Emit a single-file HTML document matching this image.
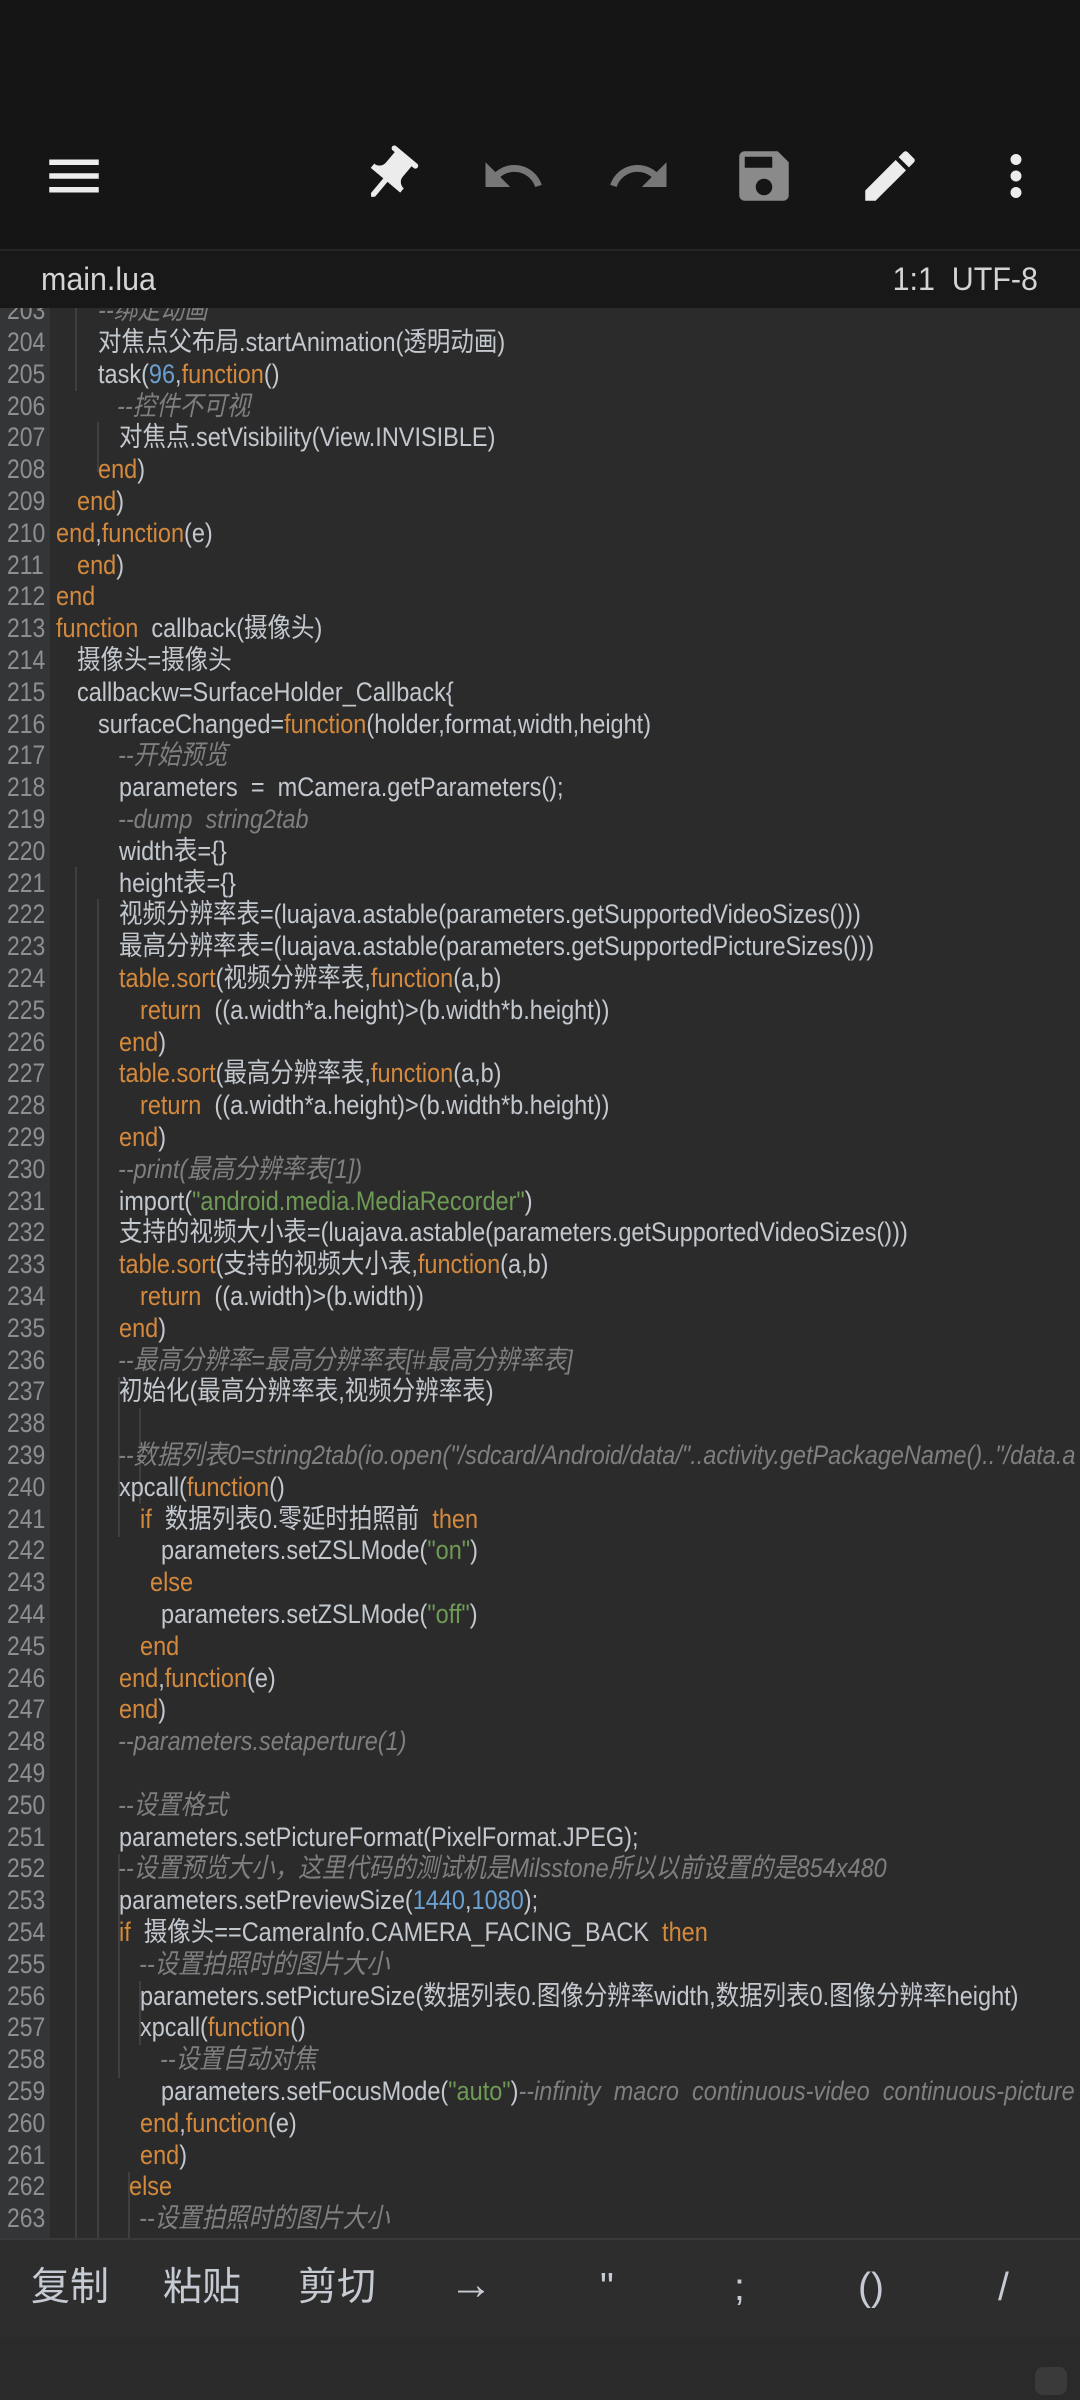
<!DOCTYPE html>
<html><head><meta charset="utf-8">
<style>
*{margin:0;padding:0;box-sizing:border-box}
body{width:1080px;height:2400px;background:#151515;position:relative;overflow:hidden;font-family:"Liberation Sans","Noto Sans CJK SC",sans-serif}
#hdr{position:absolute;left:0;top:0;width:1080px;height:249px;background:#151515}
#sep{position:absolute;left:0;top:249px;width:1080px;height:2px;background:#262626}
#fbar{position:absolute;left:0;top:251px;width:1080px;height:57px;background:#181818;color:#d4d4d4;font-size:32px}
#fbar .t{position:absolute;top:10px;transform:scaleX(.95);transform-origin:left}
#fbar .r{position:absolute;top:10px;right:42px;transform:scaleX(.95);transform-origin:right}
.ic{position:absolute;width:66px;height:66px;top:143px}
#code{position:absolute;left:0;top:308px;width:1080px;height:1930px;background:#2b2b2b;overflow:hidden}
#gut{position:absolute;left:0;top:0;width:50px;height:1930px;background:#343537}
.g{position:absolute;width:2px;background:#3f3f3f}
.l{position:absolute;left:0;height:32px;line-height:32px;font-size:27px;white-space:pre;color:#c3c8cf}
.n{position:absolute;left:7px;width:40px;color:#8e8f91;transform:scaleX(.85);transform-origin:left}
.c{position:absolute;transform:scaleX(.87);transform-origin:left}
.k{color:#d4893c}.s{color:#6f9a55}.d{color:#6b9fd0}.m{color:#7f7f7f;font-style:italic}
#bot{position:absolute;left:0;top:2238px;width:1080px;height:162px;background:#2d2d2d;border-top:2px solid #3a3a3a}
#bot2{position:absolute;left:0;top:2337px;width:1080px;height:63px;background:#2a2a2a}
.b{position:absolute;top:2264px;font-size:39px;color:#c5cad3;line-height:48px;font-family:"Liberation Sans","Noto Sans CJK SC",sans-serif}
</style></head><body>
<div id="hdr"></div>
<svg class="ic" style="left:41px" viewBox="0 0 24 24"><path fill="#ececec" d="M3 18h18v-2H3v2zm0-5h18v-2H3v2zm0-7v2h18V6H3z"/></svg>
<svg class="ic" style="left:356px" viewBox="0 0 24 24"><g transform="rotate(40 12 12)"><path fill="#ececec" d="M16 9V4h1c.55 0 1-.45 1-1s-.45-1-1-1H7c-.55 0-1 .45-1 1s.45 1 1 1h1v5c0 1.66-1.34 3-3 3v2h5.97v7l1 1 1-1v-7H19v-2c-1.66 0-3-1.34-3-3z"/></g></svg>
<svg class="ic" style="left:480px" viewBox="0 0 24 24"><path fill="#777" d="M12.5 8c-2.65 0-5.05.99-6.9 2.6L2 7v9h9l-3.62-3.62c1.39-1.16 3.16-1.88 5.12-1.88 3.54 0 6.55 2.31 7.6 5.5l2.37-.78C21.08 11.03 17.15 8 12.5 8z"/></svg>
<svg class="ic" style="left:606px" viewBox="0 0 24 24"><path fill="#777" d="M18.4 10.6C16.55 8.99 14.15 8 11.5 8c-4.65 0-8.58 3.03-9.96 7.22L3.9 16c1.05-3.19 4.05-5.5 7.6-5.5 1.95 0 3.73.72 5.12 1.88L13 16h9V7l-3.6 3.6z"/></svg>
<svg class="ic" style="left:731px" viewBox="0 0 24 24"><path fill="#8a8a8a" d="M17 3H5c-1.11 0-2 .9-2 2v14c0 1.1.89 2 2 2h14c1.1 0 2-.9 2-2V7l-4-4zm-5 16c-1.66 0-3-1.34-3-3s1.34-3 3-3 3 1.34 3 3-1.34 3-3 3zm3-10H5V5h10v4z"/></svg>
<svg class="ic" style="left:857px" viewBox="0 0 24 24"><path fill="#ececec" d="M3 17.25V21h3.75L17.81 9.94l-3.75-3.75L3 17.25zM20.71 7.04c.39-.39.39-1.02 0-1.41l-2.34-2.34c-.39-.39-1.02-.39-1.41 0l-1.83 1.83 3.75 3.75 1.83-1.83z"/></svg>
<svg class="ic" style="left:983px" viewBox="0 0 24 24"><path fill="#ececec" d="M12 8c1.1 0 2-.9 2-2s-.9-2-2-2-2 .9-2 2 .9 2 2 2zm0 2c-1.1 0-2 .9-2 2s.9 2 2 2 2-.9 2-2-.9-2-2-2zm0 6c-1.1 0-2 .9-2 2s.9 2 2 2 2-.9 2-2-.9-2-2-2z"/></svg>
<div id="sep"></div>
<div id="fbar"><span class="t" style="left:41px">main.lua</span><span class="r">1:1&nbsp;&nbsp;UTF-8</span></div>

<div id="code">
<div id="gut"></div>
<div class="g" style="left:75px;top:0;height:83px"></div>
<div class="g" style="left:97px;top:114px;height:50px"></div>
<div class="g" style="left:75px;top:559px;height:1380px"></div>
<div class="g" style="left:97px;top:591px;height:1350px"></div>
<div class="g" style="left:118px;top:1069px;height:160px"></div>
<div class="g" style="left:139px;top:1100px;height:96px"></div>
<div class="g" style="left:118px;top:1546px;height:224px"></div>
<div class="g" style="left:139px;top:1673px;height:64px"></div>
<div class="g" style="left:128px;top:1864px;height:70px"></div>

<div class="l" style="top:-14px"><span class="n">203</span><span class="c m" style="left:98px">--绑定动画</span></div>
<div class="l" style="top:18px"><span class="n">204</span><span class="c" style="left:98px">对焦点父布局.startAnimation(透明动画)</span></div>
<div class="l" style="top:50px"><span class="n">205</span><span class="c" style="left:98px">task(<span class="d">96</span>,<span class="k">function</span>()</span></div>
<div class="l" style="top:82px"><span class="n">206</span><span class="c m" style="left:117px">--控件不可视</span></div>
<div class="l" style="top:113px"><span class="n">207</span><span class="c" style="left:119px">对焦点.setVisibility(View.INVISIBLE)</span></div>
<div class="l" style="top:145px"><span class="n">208</span><span class="c" style="left:98px"><span class="k">end</span>)</span></div>
<div class="l" style="top:177px"><span class="n">209</span><span class="c" style="left:77px"><span class="k">end</span>)</span></div>
<div class="l" style="top:209px"><span class="n">210</span><span class="c" style="left:56px"><span class="k">end</span>,<span class="k">function</span>(e)</span></div>
<div class="l" style="top:241px"><span class="n">211</span><span class="c" style="left:77px"><span class="k">end</span>)</span></div>
<div class="l" style="top:272px"><span class="n">212</span><span class="c" style="left:56px"><span class="k">end</span></span></div>
<div class="l" style="top:304px"><span class="n">213</span><span class="c" style="left:56px"><span class="k">function</span>  callback(摄像头)</span></div>
<div class="l" style="top:336px"><span class="n">214</span><span class="c" style="left:77px">摄像头=摄像头</span></div>
<div class="l" style="top:368px"><span class="n">215</span><span class="c" style="left:77px">callbackw=SurfaceHolder_Callback{</span></div>
<div class="l" style="top:400px"><span class="n">216</span><span class="c" style="left:98px">surfaceChanged=<span class="k">function</span>(holder,format,width,height)</span></div>
<div class="l" style="top:431px"><span class="n">217</span><span class="c m" style="left:118px">--开始预览</span></div>
<div class="l" style="top:463px"><span class="n">218</span><span class="c" style="left:119px">parameters  =  mCamera.getParameters();</span></div>
<div class="l" style="top:495px"><span class="n">219</span><span class="c m" style="left:118px">--dump  string2tab</span></div>
<div class="l" style="top:527px"><span class="n">220</span><span class="c" style="left:119px">width表={}</span></div>
<div class="l" style="top:559px"><span class="n">221</span><span class="c" style="left:119px">height表={}</span></div>
<div class="l" style="top:590px"><span class="n">222</span><span class="c" style="left:119px">视频分辨率表=(luajava.astable(parameters.getSupportedVideoSizes()))</span></div>
<div class="l" style="top:622px"><span class="n">223</span><span class="c" style="left:119px">最高分辨率表=(luajava.astable(parameters.getSupportedPictureSizes()))</span></div>
<div class="l" style="top:654px"><span class="n">224</span><span class="c" style="left:119px"><span class="k">table.sort</span>(视频分辨率表,<span class="k">function</span>(a,b)</span></div>
<div class="l" style="top:686px"><span class="n">225</span><span class="c" style="left:140px"><span class="k">return</span>  ((a.width*a.height)&gt;(b.width*b.height))</span></div>
<div class="l" style="top:718px"><span class="n">226</span><span class="c" style="left:119px"><span class="k">end</span>)</span></div>
<div class="l" style="top:749px"><span class="n">227</span><span class="c" style="left:119px"><span class="k">table.sort</span>(最高分辨率表,<span class="k">function</span>(a,b)</span></div>
<div class="l" style="top:781px"><span class="n">228</span><span class="c" style="left:140px"><span class="k">return</span>  ((a.width*a.height)&gt;(b.width*b.height))</span></div>
<div class="l" style="top:813px"><span class="n">229</span><span class="c" style="left:119px"><span class="k">end</span>)</span></div>
<div class="l" style="top:845px"><span class="n">230</span><span class="c m" style="left:118px">--print(最高分辨率表[1])</span></div>
<div class="l" style="top:877px"><span class="n">231</span><span class="c" style="left:119px">import(<span class="s">"android.media.MediaRecorder"</span>)</span></div>
<div class="l" style="top:908px"><span class="n">232</span><span class="c" style="left:119px">支持的视频大小表=(luajava.astable(parameters.getSupportedVideoSizes()))</span></div>
<div class="l" style="top:940px"><span class="n">233</span><span class="c" style="left:119px"><span class="k">table.sort</span>(支持的视频大小表,<span class="k">function</span>(a,b)</span></div>
<div class="l" style="top:972px"><span class="n">234</span><span class="c" style="left:140px"><span class="k">return</span>  ((a.width)&gt;(b.width))</span></div>
<div class="l" style="top:1004px"><span class="n">235</span><span class="c" style="left:119px"><span class="k">end</span>)</span></div>
<div class="l" style="top:1036px"><span class="n">236</span><span class="c m" style="left:118px">--最高分辨率=最高分辨率表[#最高分辨率表]</span></div>
<div class="l" style="top:1067px"><span class="n">237</span><span class="c" style="left:119px">初始化(最高分辨率表,视频分辨率表)</span></div>
<div class="l" style="top:1099px"><span class="n">238</span></div>
<div class="l" style="top:1131px"><span class="n">239</span><span class="c m" style="left:118px">--数据列表0=string2tab(io.open("/sdcard/Android/data/"..activity.getPackageName().."/data.a</span></div>
<div class="l" style="top:1163px"><span class="n">240</span><span class="c" style="left:119px">xpcall(<span class="k">function</span>()</span></div>
<div class="l" style="top:1195px"><span class="n">241</span><span class="c" style="left:140px"><span class="k">if</span>  数据列表0.零延时拍照前  <span class="k">then</span></span></div>
<div class="l" style="top:1226px"><span class="n">242</span><span class="c" style="left:161px">parameters.setZSLMode(<span class="s">"on"</span>)</span></div>
<div class="l" style="top:1258px"><span class="n">243</span><span class="c" style="left:150px"><span class="k">else</span></span></div>
<div class="l" style="top:1290px"><span class="n">244</span><span class="c" style="left:161px">parameters.setZSLMode(<span class="s">"off"</span>)</span></div>
<div class="l" style="top:1322px"><span class="n">245</span><span class="c" style="left:140px"><span class="k">end</span></span></div>
<div class="l" style="top:1354px"><span class="n">246</span><span class="c" style="left:119px"><span class="k">end</span>,<span class="k">function</span>(e)</span></div>
<div class="l" style="top:1385px"><span class="n">247</span><span class="c" style="left:119px"><span class="k">end</span>)</span></div>
<div class="l" style="top:1417px"><span class="n">248</span><span class="c m" style="left:118px">--parameters.setaperture(1)</span></div>
<div class="l" style="top:1449px"><span class="n">249</span></div>
<div class="l" style="top:1481px"><span class="n">250</span><span class="c m" style="left:118px">--设置格式</span></div>
<div class="l" style="top:1513px"><span class="n">251</span><span class="c" style="left:119px">parameters.setPictureFormat(PixelFormat.JPEG);</span></div>
<div class="l" style="top:1544px"><span class="n">252</span><span class="c m" style="left:118px">--设置预览大小，这里代码的测试机是Milsstone所以以前设置的是854x480</span></div>
<div class="l" style="top:1576px"><span class="n">253</span><span class="c" style="left:119px">parameters.setPreviewSize(<span class="d">1440</span>,<span class="d">1080</span>);</span></div>
<div class="l" style="top:1608px"><span class="n">254</span><span class="c" style="left:119px"><span class="k">if</span>  摄像头==CameraInfo.CAMERA_FACING_BACK  <span class="k">then</span></span></div>
<div class="l" style="top:1640px"><span class="n">255</span><span class="c m" style="left:139px">--设置拍照时的图片大小</span></div>
<div class="l" style="top:1672px"><span class="n">256</span><span class="c" style="left:140px">parameters.setPictureSize(数据列表0.图像分辨率width,数据列表0.图像分辨率height)</span></div>
<div class="l" style="top:1703px"><span class="n">257</span><span class="c" style="left:140px">xpcall(<span class="k">function</span>()</span></div>
<div class="l" style="top:1735px"><span class="n">258</span><span class="c m" style="left:160px">--设置自动对焦</span></div>
<div class="l" style="top:1767px"><span class="n">259</span><span class="c" style="left:161px">parameters.setFocusMode(<span class="s">"auto"</span>)<span class="m">--infinity  macro  continuous-video  continuous-picture  edof</span></span></div>
<div class="l" style="top:1799px"><span class="n">260</span><span class="c" style="left:140px"><span class="k">end</span>,<span class="k">function</span>(e)</span></div>
<div class="l" style="top:1831px"><span class="n">261</span><span class="c" style="left:140px"><span class="k">end</span>)</span></div>
<div class="l" style="top:1862px"><span class="n">262</span><span class="c" style="left:129px"><span class="k">else</span></span></div>
<div class="l" style="top:1894px"><span class="n">263</span><span class="c m" style="left:139px">--设置拍照时的图片大小</span></div>
</div>

<div id="bot"></div>
<div id="bot2"></div>
<div class="b" style="left:31px">复制</div>
<div class="b" style="left:163px">粘贴</div>
<div class="b" style="left:298px">剪切</div>
<div class="b" style="left:449px;font-size:44px;top:2261px">→</div>
<div class="b" style="left:600px">"</div>
<div class="b" style="left:734px">;</div>
<div class="b" style="left:858px">()</div>
<div class="b" style="left:998px">/</div>
<div style="position:absolute;left:1035px;top:2367px;width:32px;height:28px;border-radius:8px;background:#3a3a3a"></div>
</body></html>
